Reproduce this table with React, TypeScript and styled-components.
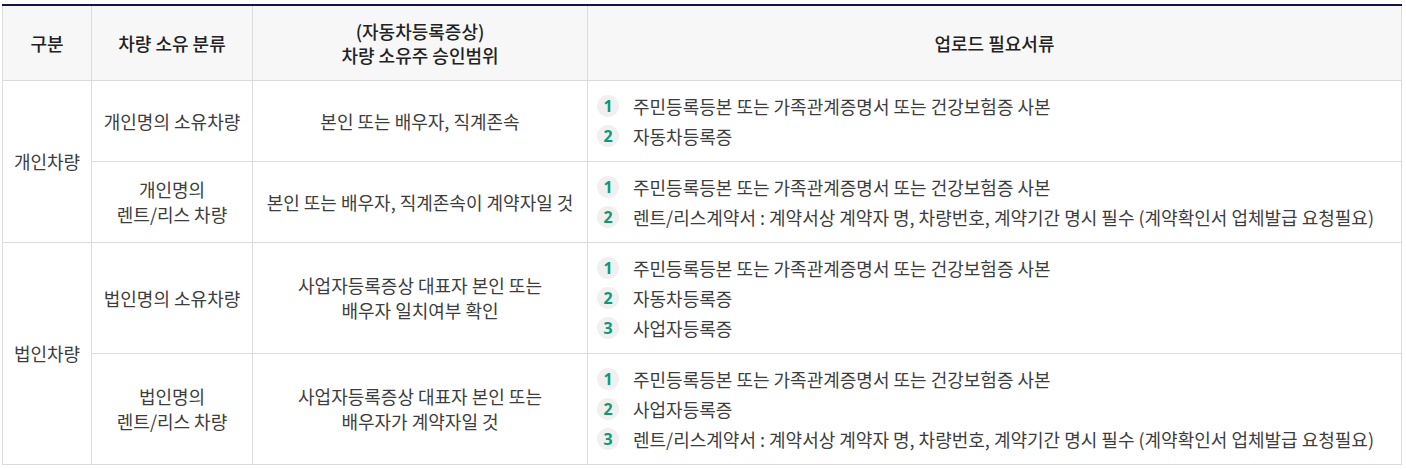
import React from "react";
import styled, { createGlobalStyle } from "styled-components";

const GlobalStyle = createGlobalStyle`
  html, body {
    margin: 0;
    padding: 0;
    background: #ffffff;
  }
  body {
    font-family: "Noto Sans CJK KR", "Noto Sans", sans-serif;
  }
`;

const Page = styled.div`
  padding: 4px 4px 0 2px;
`;

const Table = styled.table`
  width: 1400px;
  border-collapse: collapse;
  table-layout: fixed;
  border-top: 2px solid #14144a;
  font-family: "Noto Sans CJK KR", "Noto Sans", sans-serif;
  font-size: 18px;
  letter-spacing: 0;
`;

const Th = styled.th`
  background: #f7f7f7;
  color: #222;
  font-weight: 500;
  line-height: 24px;
  height: 48px;
  padding: 13px 4px;
  border: 1px solid #dcdcdc;
  border-top: none;
  text-align: center;
  vertical-align: middle;
`;

const Td = styled.td<{ $tall?: boolean }>`
  color: #3d3d3d;
  font-weight: 400;
  line-height: 25px;
  padding: 0 4px;
  border: 1px solid #dcdcdc;
  text-align: center;
  vertical-align: middle;
  height: ${(p) => (p.$tall ? "110px" : "80px")};
`;

const DocCell = styled.td`
  color: #3d3d3d;
  border: 1px solid #dcdcdc;
  padding: 14px 9px;
  vertical-align: middle;
  text-align: left;
`;

const DocList = styled.ol`
  list-style: none;
  margin: 0;
  padding: 0;
  display: flex;
  flex-direction: column;
  gap: 8px;
`;

const DocItem = styled.li`
  display: flex;
  align-items: center;
  height: 22px;
  line-height: 22px;
  white-space: nowrap;
`;

const Badge = styled.span`
  flex: none;
  width: 22px;
  height: 22px;
  border-radius: 50%;
  background: #f0f0f0;
  color: #0a9a76;
  font-size: 16px;
  font-weight: 700;
  display: inline-flex;
  align-items: center;
  justify-content: center;
  margin-right: 14px;
  font-family: "Noto Sans", "Noto Sans CJK KR", sans-serif;
`;

const Docs: React.FC<{ items: string[] }> = ({ items }) => (
  <DocList>
    {items.map((t, i) => (
      <DocItem key={i}>
        <Badge>{i + 1}</Badge>
        {t}
      </DocItem>
    ))}
  </DocList>
);

const RESIDENT = "주민등록등본 또는 가족관계증명서 또는 건강보험증 사본";
const RENT = "렌트/리스계약서 : 계약서상 계약자 명, 차량번호, 계약기간 명시 필수 (계약확인서 업체발급 요청필요)";

export default function App() {
  return (
    <Page>
      <GlobalStyle />
      <Table>
        <colgroup>
          <col style={{ width: 89 }} />
          <col style={{ width: 161 }} />
          <col style={{ width: 335 }} />
          <col />
        </colgroup>
        <thead>
          <tr>
            <Th>구분</Th>
            <Th>차량 소유 분류</Th>
            <Th>
              (자동차등록증상)
              <br />
              차량 소유주 승인범위
            </Th>
            <Th>업로드 필요서류</Th>
          </tr>
        </thead>
        <tbody>
          <tr>
            <Td rowSpan={2}>개인차량</Td>
            <Td>개인명의 소유차량</Td>
            <Td>본인 또는 배우자, 직계존속</Td>
            <DocCell>
              <Docs items={[RESIDENT, "자동차등록증"]} />
            </DocCell>
          </tr>
          <tr>
            <Td>
              개인명의
              <br />
              렌트/리스 차량
            </Td>
            <Td>본인 또는 배우자, 직계존속이 계약자일 것</Td>
            <DocCell>
              <Docs items={[RESIDENT, RENT]} />
            </DocCell>
          </tr>
          <tr>
            <Td rowSpan={2}>법인차량</Td>
            <Td $tall>법인명의 소유차량</Td>
            <Td $tall>
              사업자등록증상 대표자 본인 또는
              <br />
              배우자 일치여부 확인
            </Td>
            <DocCell>
              <Docs items={[RESIDENT, "자동차등록증", "사업자등록증"]} />
            </DocCell>
          </tr>
          <tr>
            <Td $tall>
              법인명의
              <br />
              렌트/리스 차량
            </Td>
            <Td $tall>
              사업자등록증상 대표자 본인 또는
              <br />
              배우자가 계약자일 것
            </Td>
            <DocCell>
              <Docs items={[RESIDENT, "사업자등록증", RENT]} />
            </DocCell>
          </tr>
        </tbody>
      </Table>
    </Page>
  );
}
